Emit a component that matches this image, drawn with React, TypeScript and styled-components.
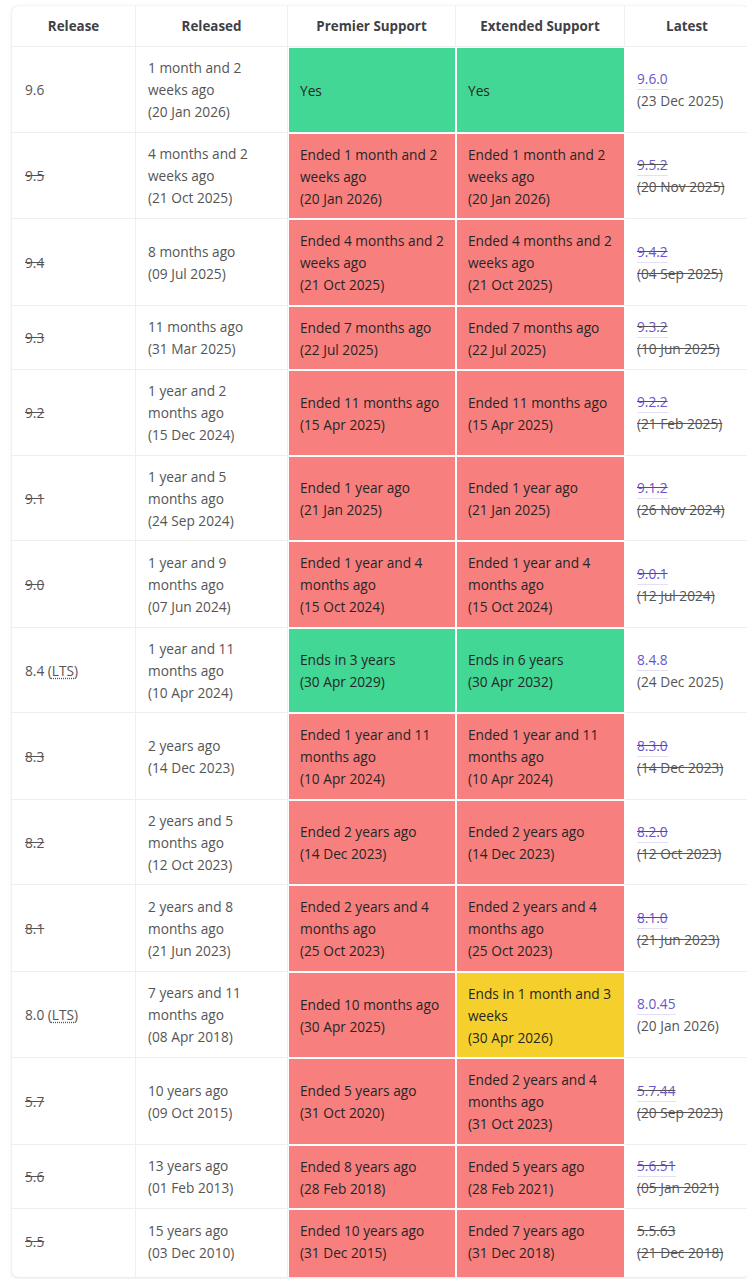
import React from "react";
import styled, { createGlobalStyle } from "styled-components";

const GlobalStyle = createGlobalStyle`
  html, body { margin: 0; padding: 0; background: #ffffff; overflow-x: hidden; }
  body { font-family: "Open Sans", "Noto Sans", "Liberation Sans", sans-serif; }
`;

type Tone = "green" | "red" | "yellow";

interface Support {
  tone: Tone;
  lines: string[];
}

interface Row {
  release: string;
  lts?: boolean;
  eol: boolean;
  released: string[];
  premier: Support;
  extended: Support;
  latest: string;
  latestDate: string;
  latestLink?: boolean;
}

const red = (lines: string[]): Support => ({ tone: "red", lines });
const green = (lines: string[]): Support => ({ tone: "green", lines });

const rows: Row[] = [
  { release: "9.6", eol: false, released: ["1 month and 2", "weeks ago", "(20 Jan 2026)"], premier: green(["Yes"]), extended: green(["Yes"]), latest: "9.6.0", latestDate: "(23 Dec 2025)" },
  { release: "9.5", eol: true, released: ["4 months and 2", "weeks ago", "(21 Oct 2025)"], premier: red(["Ended 1 month and 2", "weeks ago", "(20 Jan 2026)"]), extended: red(["Ended 1 month and 2", "weeks ago", "(20 Jan 2026)"]), latest: "9.5.2", latestDate: "(20 Nov 2025)" },
  { release: "9.4", eol: true, released: ["8 months ago", "(09 Jul 2025)"], premier: red(["Ended 4 months and 2", "weeks ago", "(21 Oct 2025)"]), extended: red(["Ended 4 months and 2", "weeks ago", "(21 Oct 2025)"]), latest: "9.4.2", latestDate: "(04 Sep 2025)" },
  { release: "9.3", eol: true, released: ["11 months ago", "(31 Mar 2025)"], premier: red(["Ended 7 months ago", "(22 Jul 2025)"]), extended: red(["Ended 7 months ago", "(22 Jul 2025)"]), latest: "9.3.2", latestDate: "(10 Jun 2025)" },
  { release: "9.2", eol: true, released: ["1 year and 2", "months ago", "(15 Dec 2024)"], premier: red(["Ended 11 months ago", "(15 Apr 2025)"]), extended: red(["Ended 11 months ago", "(15 Apr 2025)"]), latest: "9.2.2", latestDate: "(21 Feb 2025)" },
  { release: "9.1", eol: true, released: ["1 year and 5", "months ago", "(24 Sep 2024)"], premier: red(["Ended 1 year ago", "(21 Jan 2025)"]), extended: red(["Ended 1 year ago", "(21 Jan 2025)"]), latest: "9.1.2", latestDate: "(26 Nov 2024)" },
  { release: "9.0", eol: true, released: ["1 year and 9", "months ago", "(07 Jun 2024)"], premier: red(["Ended 1 year and 4", "months ago", "(15 Oct 2024)"]), extended: red(["Ended 1 year and 4", "months ago", "(15 Oct 2024)"]), latest: "9.0.1", latestDate: "(12 Jul 2024)" },
  { release: "8.4", lts: true, eol: false, released: ["1 year and 11", "months ago", "(10 Apr 2024)"], premier: green(["Ends in 3 years", "(30 Apr 2029)"]), extended: green(["Ends in 6 years", "(30 Apr 2032)"]), latest: "8.4.8", latestDate: "(24 Dec 2025)" },
  { release: "8.3", eol: true, released: ["2 years ago", "(14 Dec 2023)"], premier: red(["Ended 1 year and 11", "months ago", "(10 Apr 2024)"]), extended: red(["Ended 1 year and 11", "months ago", "(10 Apr 2024)"]), latest: "8.3.0", latestDate: "(14 Dec 2023)" },
  { release: "8.2", eol: true, released: ["2 years and 5", "months ago", "(12 Oct 2023)"], premier: red(["Ended 2 years ago", "(14 Dec 2023)"]), extended: red(["Ended 2 years ago", "(14 Dec 2023)"]), latest: "8.2.0", latestDate: "(12 Oct 2023)" },
  { release: "8.1", eol: true, released: ["2 years and 8", "months ago", "(21 Jun 2023)"], premier: red(["Ended 2 years and 4", "months ago", "(25 Oct 2023)"]), extended: red(["Ended 2 years and 4", "months ago", "(25 Oct 2023)"]), latest: "8.1.0", latestDate: "(21 Jun 2023)" },
  { release: "8.0", lts: true, eol: false, released: ["7 years and 11", "months ago", "(08 Apr 2018)"], premier: red(["Ended 10 months ago", "(30 Apr 2025)"]), extended: { tone: "yellow", lines: ["Ends in 1 month and 3", "weeks", "(30 Apr 2026)"] }, latest: "8.0.45", latestDate: "(20 Jan 2026)" },
  { release: "5.7", eol: true, released: ["10 years ago", "(09 Oct 2015)"], premier: red(["Ended 5 years ago", "(31 Oct 2020)"]), extended: red(["Ended 2 years and 4", "months ago", "(31 Oct 2023)"]), latest: "5.7.44", latestDate: "(20 Sep 2023)" },
  { release: "5.6", eol: true, released: ["13 years ago", "(01 Feb 2013)"], premier: red(["Ended 8 years ago", "(28 Feb 2018)"]), extended: red(["Ended 5 years ago", "(28 Feb 2021)"]), latest: "5.6.51", latestDate: "(05 Jan 2021)" },
  { release: "5.5", eol: true, released: ["15 years ago", "(03 Dec 2010)"], premier: red(["Ended 10 years ago", "(31 Dec 2015)"]), extended: red(["Ended 7 years ago", "(31 Dec 2018)"]), latest: "5.5.63", latestDate: "(21 Dec 2018)", latestLink: false },
];

const Page = styled.div`
  padding: 6px 0 3px 12px;
`;

const Card = styled.div`
  width: 737px;
  background: #ffffff;
  border-radius: 6px;
  box-shadow: 0 0 1px rgba(0, 0, 0, 0.18), 0 1px 4px rgba(0, 0, 0, 0.1);
  overflow: hidden;
`;

const Table = styled.table`
  width: 100%;
  table-layout: fixed;
  border-collapse: separate;
  border-spacing: 0;
  font-size: 13.7px;
  line-height: 22px;
  color: #555555;

  tbody tr:last-child td {
    padding-bottom: 12.5px;
    border-bottom: none;
  }
`;

const HeadCell = styled.th`
  font-weight: 700;
  font-size: 13.4px;
  color: #3f3f46;
  text-align: center;
  padding: 9px 12px;
  border-right: 1px solid #efefef;
  border-bottom: 1px solid #efefef;
  white-space: nowrap;
  &:last-child { border-right: none; }
`;

const Cell = styled.td<{ $first?: boolean }>`
  padding: 10px 12px 8.5px ${(p) => (p.$first ? "13px" : "12px")};
  vertical-align: middle;
  border-right: 1px solid #efefef;
  border-bottom: 1px solid #efefef;
  text-align: left;
  &:last-child { border-right: none; }
`;

const toneColor: Record<Tone, string> = {
  green: "#42d794",
  red: "#f77f7e",
  yellow: "#f5d02c",
};

const SupportCell = styled.td<{ $tone: Tone }>`
  padding: 10px 11px 8.5px;
  vertical-align: middle;
  background: ${(p) => toneColor[p.$tone]};
  border: 1px solid #ffffff;
  color: #262626;
  text-align: left;
`;

const Line = styled.span`
  display: block;
  white-space: nowrap;
`;

const ReleaseName = styled.span<{ $eol: boolean }>`
  text-decoration: ${(p) => (p.$eol ? "line-through" : "none")};
  text-decoration-color: #555555;
`;

const Abbr = styled.abbr`
  text-decoration: underline dotted;
  text-underline-offset: 2px;
`;

const VersionLink = styled.a<{ $eol: boolean }>`
  display: inline-block;
  color: #6a55c9;
  text-decoration: ${(p) => (p.$eol ? "line-through" : "none")};
  text-decoration-color: #555555;
  border-bottom: 1px solid #e4e0f2;
  line-height: 20px;
  cursor: pointer;
`;

const PlainVersion = styled.span<{ $eol: boolean }>`
  text-decoration: ${(p) => (p.$eol ? "line-through" : "none")};
`;

const LatestDate = styled.span<{ $eol: boolean }>`
  display: block;
  white-space: nowrap;
  text-decoration: ${(p) => (p.$eol ? "line-through" : "none")};
`;

const widths = [124, 152, 168, 169, 124];

export default function App() {
  return (
    <>
      <GlobalStyle />
      <Page>
        <Card>
          <Table>
            <colgroup>
              {widths.map((w, i) => (
                <col key={i} style={{ width: w }} />
              ))}
            </colgroup>
            <thead>
              <tr>
                <HeadCell>Release</HeadCell>
                <HeadCell>Released</HeadCell>
                <HeadCell>Premier Support</HeadCell>
                <HeadCell>Extended Support</HeadCell>
                <HeadCell>Latest</HeadCell>
              </tr>
            </thead>
            <tbody>
              {rows.map((r) => (
                <tr key={r.release}>
                  <Cell $first>
                    <ReleaseName $eol={r.eol}>{r.release}</ReleaseName>
                    {r.lts && (
                      <>
                        {" "}(<Abbr title="Long Term Support">LTS</Abbr>)
                      </>
                    )}
                  </Cell>
                  <Cell>
                    {r.released.map((l, i) => (
                      <Line key={i}>{l}</Line>
                    ))}
                  </Cell>
                  <SupportCell $tone={r.premier.tone}>
                    {r.premier.lines.map((l, i) => (
                      <Line key={i}>{l}</Line>
                    ))}
                  </SupportCell>
                  <SupportCell $tone={r.extended.tone}>
                    {r.extended.lines.map((l, i) => (
                      <Line key={i}>{l}</Line>
                    ))}
                  </SupportCell>
                  <Cell>
                    {r.latestLink === false ? (
                      <PlainVersion $eol={r.eol}>{r.latest}</PlainVersion>
                    ) : (
                      <VersionLink $eol={r.eol}>{r.latest}</VersionLink>
                    )}
                    <LatestDate $eol={r.eol}>{r.latestDate}</LatestDate>
                  </Cell>
                </tr>
              ))}
            </tbody>
          </Table>
        </Card>
      </Page>
    </>
  );
}
